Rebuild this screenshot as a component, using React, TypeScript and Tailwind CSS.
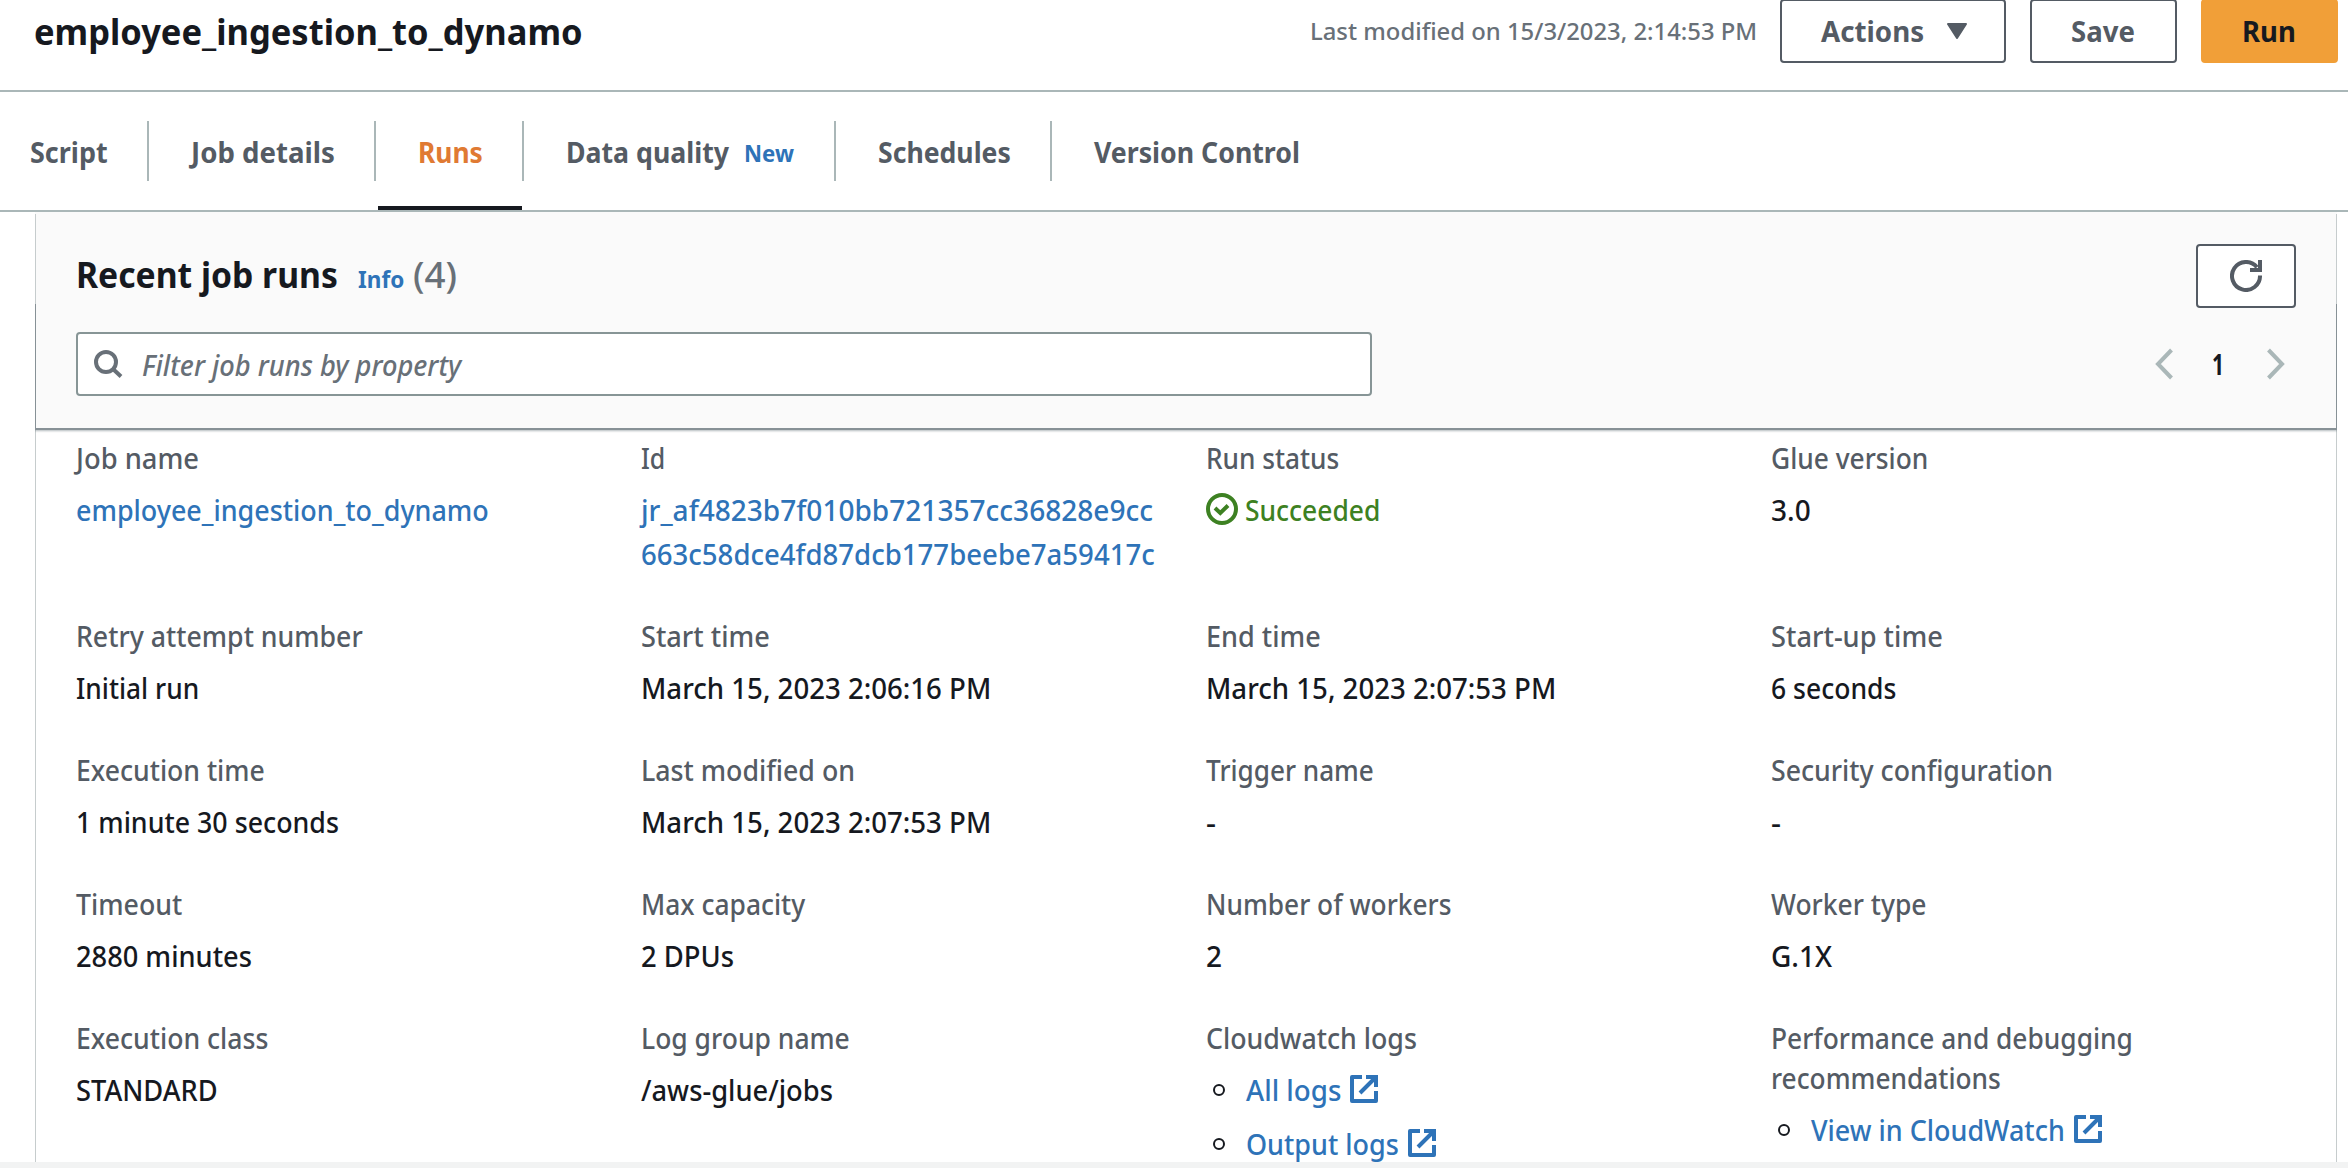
import { useLayoutEffect, useRef, useState, type ReactNode } from 'react';

/** One line of text condensed horizontally so that it occupies a given width. */
function Fit({ w, children, className = '' }: { w: number; children: ReactNode; className?: string }) {
  const ref = useRef<HTMLSpanElement>(null);
  const [scale, setScale] = useState(1);
  useLayoutEffect(() => {
    const measure = () => {
      if (ref.current) setScale((w + 1) / ref.current.offsetWidth);
    };
    measure();
    document.fonts.ready.then(measure);
  }, [w]);
  return (
    <span className={`inline-block whitespace-nowrap ${className}`} style={{ width: w + 1 }}>
      <span ref={ref} className="inline-block origin-left" style={{ transform: `translateY(1px) scaleX(${scale})` }}>
        {children}
      </span>
    </span>
  );
}

function SearchIcon() {
  return (
    <svg className="size-8 shrink-0" viewBox="0 0 32 32" fill="none" stroke="#687078" strokeWidth="4">
      <circle cx="14" cy="14" r="10" />
      <path d="M21 21l8 7.5" />
    </svg>
  );
}

function RefreshIcon() {
  return (
    <svg className="size-8" viewBox="0 0 32 32" fill="none" stroke="#545b64" strokeWidth="4">
      <path d="M30 15.5A14 14 0 1 1 27 7.3" />
      <path d="M30 0V10H20" />
    </svg>
  );
}

function Chevron({ d }: { d: string }) {
  return (
    <svg className="h-8 w-[18px]" viewBox="0 0 18 32" fill="none" stroke="#aab7b8" strokeWidth="4">
      <path d={d} />
    </svg>
  );
}

function ExternalIcon() {
  return (
    <svg className="size-7" viewBox="0 0 28 28" fill="none" stroke="#2e73b8" strokeWidth="4">
      <path d="M12 2H2V26H26V16" strokeLinejoin="round" />
      <path d="M16 2H26V12M26 2L10 18" />
    </svg>
  );
}

function SuccessIcon() {
  return (
    <svg className="size-8" viewBox="0 0 32 32" fill="none" stroke="#3d8122" strokeWidth="4">
      <circle cx="16" cy="16" r="14" />
      <path d="M9 15l5.3 5L22 12.5" />
    </svg>
  );
}

function Tab({ label, w, active, last, box, badge }: { label: string; w: number; active?: boolean; last?: boolean; box: string; badge?: ReactNode }) {
  return (
    <div className={`relative flex h-full items-center ${box}`}>
      <div className={`flex h-[60px] flex-1 items-center ${last ? '' : 'border-r-2 border-[#aab7b8]'}`}>
        <Fit w={w} className={`ml-[42px] font-bold ${active ? 'text-[#e07a33]' : ''}`}>
          {label}
        </Fit>
        {badge}
      </div>
      {active && <div className="absolute right-0.5 bottom-0 left-0.5 h-1 bg-[#16191f]" />}
    </div>
  );
}

function Button({ children, className }: { children: ReactNode; className: string }) {
  return (
    <button className={`flex h-16 items-center rounded border-2 pl-[39px] font-bold ${className}`}>{children}</button>
  );
}

function Log({ label, w }: { label: string; w: number }) {
  return (
    <li className="flex h-11 items-center">
      <span className="mt-0.5 mr-[21px] ml-[7px] size-3 rounded-full border-2 border-[#16191f]" />
      <a className="flex items-center gap-[9px] text-[#2e73b8]">
        <Fit w={w}>{label}</Fit>
        <ExternalIcon />
      </a>
    </li>
  );
}

type Line = [string, number];

function Field({ label, value, link, children }: { label: Line[]; value?: Line[]; link?: boolean; children?: ReactNode }) {
  return (
    <div className="flex flex-col gap-2.5">
      <div className="flex flex-col leading-10 text-[#545b64]">
        {label.map(([t, w]) => (
          <Fit key={t} w={w}>{t}</Fit>
        ))}
      </div>
      {children ?? (
        <div className={`flex flex-col leading-[44px] ${link ? 'text-[#2e73b8]' : ''}`}>
          {value?.map(([t, w]) => (
            <Fit key={t} w={w}>{t}</Fit>
          ))}
        </div>
      )}
    </div>
  );
}

export default function App() {
  return (
    <div className="flex h-[1168px] w-[2348px] flex-col overflow-hidden bg-white font-['Noto_Sans',sans-serif] text-[28px] leading-10 font-medium text-[#16191f]">
      <header className="flex h-[92px] shrink-0 items-start justify-between border-b-2 border-[#aab7b8] pr-2.5 pl-[34px]">
        <h1 className="mt-[9px] text-4xl leading-[44px] font-bold">
          <Fit w={548}>employee_ingestion_to_dynamo</Fit>
        </h1>
        <div className="-mt-px flex items-start">
          <Fit w={446} className="mt-[11px] mr-[23px] text-2xl leading-10 text-[#687078]">
            Last modified on 15/3/2023, 2:14:53 PM
          </Fit>
          <Button className="mr-6 w-[226px] border-[#545b64] text-[#545b64]">
            <Fit w={102} className="-mt-0.5">Actions</Fit>
            <svg className="ml-[23px] h-4 w-5" viewBox="0 0 20 16" fill="#545b64" stroke="#545b64" strokeWidth="2" strokeLinejoin="round">
              <path d="M1 1H19L10 15Z" />
            </svg>
          </Button>
          <Button className="mr-6 w-[147px] border-[#545b64] text-[#545b64]">
            <Fit w={63} className="-mt-0.5">Save</Fit>
          </Button>
          <Button className="w-[137px] border-[#f19f38] bg-[#f19f38]">
            <Fit w={53} className="-mt-0.5">Run</Fit>
          </Button>
        </div>
      </header>

      <nav className="flex h-[120px] shrink-0 items-center border-b-2 border-[#aab7b8] text-[#545b64]">
        <Tab box="w-[161px] -ml-3" label="Script" w={77} />
        <Tab box="w-[227px]" label="Job details" w={143} />
        <Tab box="w-[148px]" label="Runs" w={64} active />
        <Tab
          box="w-[312px]"
          label="Data quality"
          w={162}
          badge={<Fit w={49} className="mt-0.5 ml-[15px] text-2xl leading-10 font-bold text-[#2e73b8]">New</Fit>}
        />
        <Tab box="w-[216px]" label="Schedules" w={132} />
        <Tab box="w-[290px]" label="Version Control" w={205} last />
      </nav>

      <main className="mr-[11px] ml-[35px] h-[950px] shrink-0 overflow-hidden">
        <section className="relative h-[218px] border-b-2 border-[#879196] bg-[#fafafa] px-[41px] pt-8 shadow-[0_1px_2px_rgba(0,28,36,0.3)]">
          <div className="absolute top-0.5 left-0 h-[90px] w-px bg-[#c6cccd]" />
          <div className="absolute top-0.5 right-0 h-[90px] w-px bg-[#c6cccd]" />
          <div className="absolute bottom-0 left-0 h-[124px] w-px bg-[#879196]" />
          <div className="absolute right-0 bottom-0 h-[124px] w-px bg-[#879196]" />
          <div className="flex h-16 items-center justify-between">
            <div className="flex items-baseline pb-1">
              <h2 className="text-4xl leading-[44px] font-bold">
                <Fit w={261}>Recent job runs</Fit>
              </h2>
              <Fit w={45} className="ml-5 text-2xl font-bold text-[#2e73b8]">Info</Fit>
              <Fit w={43} className="ml-[9px] text-4xl leading-[44px] text-[#687078]">(4)</Fit>
            </div>
            <button className="flex h-16 w-[100px] items-center justify-center rounded border-2 border-[#545b64] bg-white">
              <RefreshIcon />
            </button>
          </div>
          <div className="mt-6 flex items-center justify-between">
            <div className="flex h-16 w-[1296px] items-center rounded border-2 border-[#879596] bg-white pl-3.5 text-[#687078]">
              <SearchIcon />
              <Fit w={318} className="ml-[18px] italic">Filter job runs by property</Fit>
            </div>
            <div className="mr-[11px] flex items-center">
              <Chevron d="M16.5 2L3 16L16.5 30" />
              <Fit w={11} className="mr-[43px] ml-[39px] pb-0.5 font-bold">1</Fit>
              <Chevron d="M1.5 2L15 16L1.5 30" />
            </div>
          </div>
        </section>

        <section className="grid grid-cols-[565px_565px_565px_1fr] gap-y-10 border-x border-[#c6cccd] pt-[7px] pl-10">
          <Field label={[['Job name', 122]]} value={[['employee_ingestion_to_dynamo', 412]]} link />
          <Field label={[['Id', 23]]} value={[['jr_af4823b7f010bb721357cc36828e9cc', 511], ['663c58dce4fd87dcb177beebe7a59417c', 513]]} link />
          <Field label={[['Run status', 132]]}>
            <div className="flex h-11 items-center gap-[7px] text-[#3d8122]">
              <SuccessIcon />
              <Fit w={134}>Succeeded</Fit>
            </div>
          </Field>
          <Field label={[['Glue version', 156]]} value={[['3.0', 39]]} />

          <Field label={[['Retry attempt number', 286]]} value={[['Initial run', 122]]} />
          <Field label={[['Start time', 128]]} value={[['March 15, 2023 2:06:16 PM', 349]]} />
          <Field label={[['End time', 114]]} value={[['March 15, 2023 2:07:53 PM', 349]]} />
          <Field label={[['Start-up time', 171]]} value={[['6 seconds', 124]]} />

          <Field label={[['Execution time', 188]]} value={[['1 minute 30 seconds', 262]]} />
          <Field label={[['Last modified on', 213]]} value={[['March 15, 2023 2:07:53 PM', 349]]} />
          <Field label={[['Trigger name', 167]]} value={[['-', 9]]} />
          <Field label={[['Security configuration', 281]]} value={[['-', 9]]} />

          <Field label={[['Timeout', 105]]} value={[['2880 minutes', 175]]} />
          <Field label={[['Max capacity', 163]]} value={[['2 DPUs', 92]]} />
          <Field label={[['Number of workers', 244]]} value={[['2', 15]]} />
          <Field label={[['Worker type', 155]]} value={[['G.1X', 60]]} />

          <Field label={[['Execution class', 191]]} value={[['STANDARD', 141]]} />
          <Field label={[['Log group name', 208]]} value={[['/aws-glue/jobs', 191]]} />
          <Field label={[['Cloudwatch logs', 210]]}>
            <ul className="flex flex-col gap-2.5">
              <Log label="All logs" w={94} />
              <Log label="Output logs" w={152} />
            </ul>
          </Field>
          <Field label={[['Performance and debugging', 361], ['recommendations', 229]]}>
            <ul className="flex flex-col gap-2.5">
              <Log label="View in CloudWatch" w={253} />
            </ul>
          </Field>
        </section>
      </main>
      <footer className="h-1.5 shrink-0 bg-[#f2f3f3]" />
    </div>
  );
}
